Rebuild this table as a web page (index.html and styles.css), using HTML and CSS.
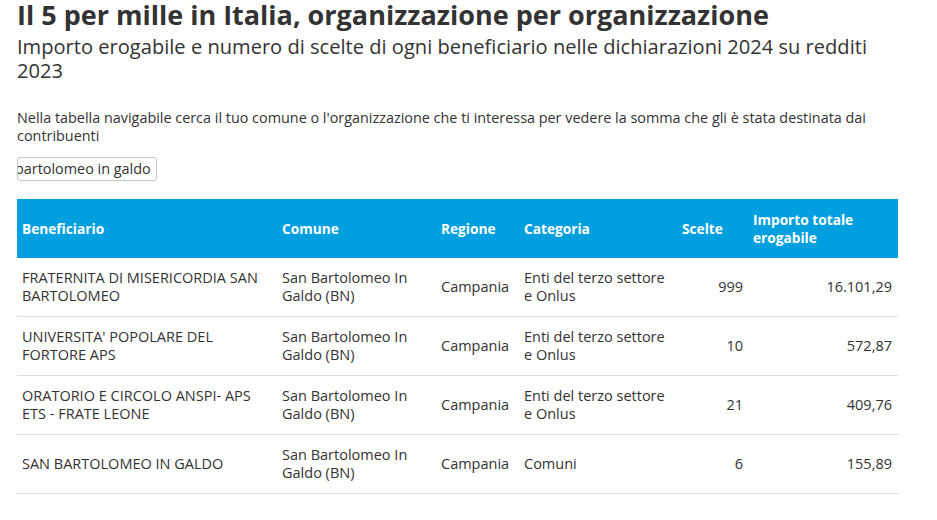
FILE: index.html
```html
<!DOCTYPE html>
<html lang="it">
<head>
<meta charset="utf-8">
<link rel="stylesheet" href="styles.css">
</head>
<body>
<div class="page">
  <h1 class="title">Il 5 per mille in Italia, organizzazione per organizzazione</h1>
  <h2 class="subtitle">Importo erogabile e numero di scelte di ogni beneficiario nelle dichiarazioni 2024 su redditi 2023</h2>
  <p class="intro">Nella tabella navigabile cerca il tuo comune o l'organizzazione che ti interessa per vedere la somma che gli è stata destinata dai contribuenti</p>
  <div class="search"><span class="search-text">bartolomeo in galdo</span></div>
  <table class="data">
    <colgroup>
      <col class="c1"><col class="c2"><col class="c3"><col class="c4"><col class="c5"><col class="c6">
    </colgroup>
    <thead>
      <tr><th>Beneficiario</th><th>Comune</th><th>Regione</th><th>Categoria</th><th>Scelte</th><th>Importo totale erogabile</th></tr>
    </thead>
    <tbody>
      <tr><td>FRATERNITA DI MISERICORDIA SAN BARTOLOMEO</td><td>San Bartolomeo In Galdo (BN)</td><td>Campania</td><td>Enti del terzo settore e Onlus</td><td class="num">999</td><td class="num">16.101,29</td></tr>
      <tr><td>UNIVERSITA' POPOLARE DEL FORTORE APS</td><td>San Bartolomeo In Galdo (BN)</td><td>Campania</td><td>Enti del terzo settore e Onlus</td><td class="num">10</td><td class="num">572,87</td></tr>
      <tr><td>ORATORIO E CIRCOLO ANSPI- APS ETS - FRATE LEONE</td><td>San Bartolomeo In Galdo (BN)</td><td>Campania</td><td>Enti del terzo settore e Onlus</td><td class="num">21</td><td class="num">409,76</td></tr>
      <tr><td>SAN BARTOLOMEO IN GALDO</td><td>San Bartolomeo In Galdo (BN)</td><td>Campania</td><td>Comuni</td><td class="num">6</td><td class="num">155,89</td></tr>
    </tbody>
  </table>
</div>
</body>
</html>
```
FILE: styles.css
```css
html, body {
  margin: 0;
  padding: 0;
  background: #ffffff;
}
body {
  font-family: "Open Sans", "Liberation Sans", sans-serif;
  color: #333333;
}
.page {
  padding: 0 39px 0 17px;
}
.title {
  margin: 0;
  font-size: 27px;
  line-height: 32px;
  font-weight: 700;
  color: #333333;
  margin-top: -1px;
}
.subtitle {
  margin: 4px 0 0 0;
  font-size: 20.1px;
  line-height: 24px;
  font-weight: 400;
  color: #333333;
}
.intro {
  margin: 26px 0 0 0;
  font-size: 14.4px;
  line-height: 18px;
  color: #333333;
}
.search {
  margin-top: 12px;
  width: 138px;
  height: 22px;
  border: 1px solid #c6c6c6;
  border-radius: 3px;
  overflow: hidden;
  white-space: nowrap;
  font-size: 14.4px;
  line-height: 22px;
}
.search-text {
  display: inline-block;
  margin-left: -3px;
}
.data {
  margin-top: 18px;
  width: 881px;
  border-collapse: collapse;
  table-layout: fixed;
  font-size: 14.5px;
  line-height: 18px;
}
.c1 { width: 260px; }
.c2 { width: 159px; }
.c3 { width: 83px; }
.c4 { width: 158px; }
.c5 { width: 71px; }
.c6 { width: 150px; }
.data th {
  background: #009fdf;
  color: #ffffff;
  font-size: 13.7px;
  font-weight: 700;
  text-align: left;
  padding: 10px 5px;
  height: 39px;
}
.data td {
  padding: 11px 5px;
  height: 35.5px;
  border-bottom: 1px solid #dddddd;
  vertical-align: middle;
}
.data td.num {
  text-align: right;
}
.data td:last-child {
  padding-right: 6px;
}
```
